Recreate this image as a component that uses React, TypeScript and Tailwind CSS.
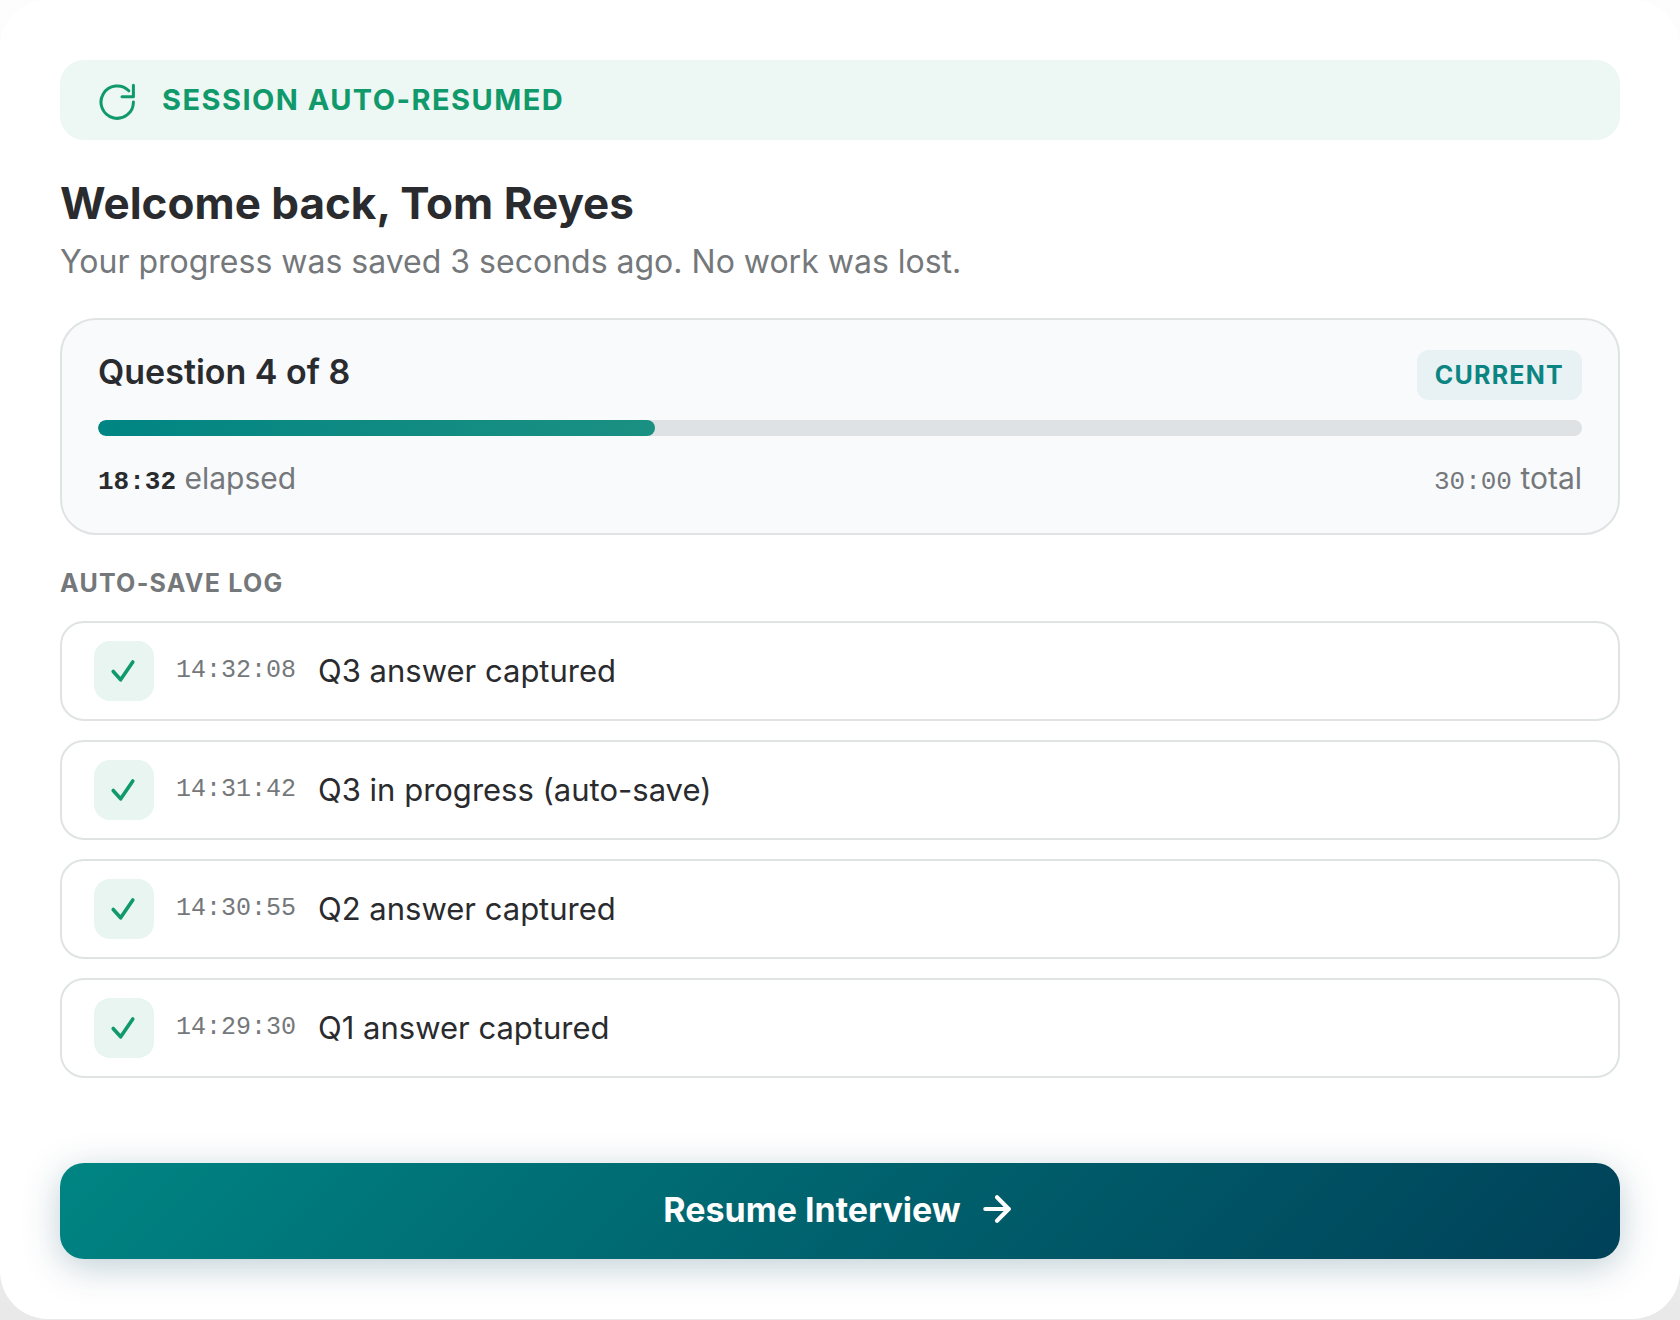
import { ArrowRight } from "lucide-react";

const logEntries = [
  { time: "14:32:08", label: "Q3 answer captured" },
  { time: "14:31:42", label: "Q3 in progress (auto-save)" },
  { time: "14:30:55", label: "Q2 answer captured" },
  { time: "14:29:30", label: "Q1 answer captured" },
];

const ResumeIcon = () => {
  return (
    <svg
      width="42"
      height="42"
      viewBox="0 0 42 42"
      fill="none"
      stroke="currentColor"
      strokeWidth="3"
      strokeLinecap="round"
      strokeLinejoin="round"
      aria-hidden="true"
    >
      <path d="M37.4 23A16.2 16.2 0 1 1 32.8 11.8" />
      <path d="M37.4 6.2V17.7H26" />
    </svg>
  );
};

const CheckIcon = () => {
  return (
    <svg
      width="32"
      height="32"
      viewBox="0 0 24 24"
      fill="none"
      stroke="currentColor"
      strokeWidth="2.7"
      strokeLinecap="round"
      strokeLinejoin="round"
      aria-hidden="true"
    >
      <path d="M3.9 12.4L9.5 18.6L18.6 5.2" />
    </svg>
  );
};

const SessionBanner = () => {
  return (
    <div
      role="status"
      className="flex h-20 items-center gap-6 rounded-3xl bg-[#edf7f4] px-9 text-[#10996b]"
    >
      <ResumeIcon />
      <p className="text-[29px] leading-10 font-bold tracking-wider">
        SESSION AUTO-RESUMED
      </p>
    </div>
  );
};

const ProgressCard = () => {
  return (
    <section className="mt-8 rounded-[36px] border-2 border-[#dfe3e4] bg-[#f8fafc] px-9 pt-[30px] pb-[31px]">
      <div className="flex items-start justify-between">
        <h2 className="text-[34px] leading-[44px] font-semibold">
          Question 4 of 8
        </h2>
        <span className="rounded-xl bg-[#e8f1f3] px-[18px] py-2 text-[25px] leading-[34px] font-bold tracking-wider text-[#0b8482]">
          CURRENT
        </span>
      </div>
      <div className="mt-5 h-4 overflow-hidden rounded-full bg-[#dee2e4]">
        <div className="h-full w-3/8 rounded-full bg-linear-to-r from-[#008583] to-[#1a9082]" />
      </div>
      <div className="mt-[22px] flex items-center justify-between text-[30px] leading-10 text-[#75787b]">
        <p>
          <span className="font-['Liberation_Mono',monospace] text-[26px] font-bold text-[#2a2b2e]">
            18:32
          </span>{" "}
          elapsed
        </p>
        <p>
          <span className="font-['Liberation_Mono',monospace] text-[26px]">
            30:00
          </span>{" "}
          total
        </p>
      </div>
    </section>
  );
};

const AutoSaveLog = () => {
  return (
    <section className="mt-[30px]">
      <h2 className="text-[25px] leading-9 font-bold tracking-wider text-[#75787b]">
        AUTO-SAVE LOG
      </h2>
      <ul className="mt-5 flex flex-col gap-[19px]">
        {logEntries.map((entry) => (
          <li
            key={entry.time}
            className="flex items-center gap-[22px] rounded-3xl border-2 border-[#dfe3e4] px-8 py-[18px]"
          >
            <span className="flex size-15 items-center justify-center rounded-2xl bg-[#e8f5f1] text-[#10996b]">
              <CheckIcon />
            </span>
            <time className="font-['Liberation_Mono',monospace] text-[25px] text-[#75787b]">
              {entry.time}
            </time>
            <span className="text-[31px] leading-10">{entry.label}</span>
          </li>
        ))}
      </ul>
    </section>
  );
};

const App = () => {
  return (
    <div className="bg-linear-to-b from-[#fdfdfd] to-[#e9e9e9] pb-px font-[Inter,sans-serif] text-[#2a2b2e]">
      <main className="rounded-[48px] bg-white p-15">
        <SessionBanner />
        <h1 className="mt-9 text-[44px] leading-[54px] font-bold">
          Welcome back, Tom Reyes
        </h1>
        <p className="mt-2 text-[32px] leading-12 text-[#75787b]">
          Your progress was saved 3 seconds ago. No work was lost.
        </p>
        <ProgressCard />
        <AutoSaveLog />
        <button
          type="button"
          className="mt-[85px] flex h-24 w-full items-center justify-center gap-4 rounded-3xl bg-linear-135 from-[#008583] to-[#004158] pb-1 text-[34px] font-bold text-white shadow-[0_8px_36px_rgba(0,65,88,0.25)]"
        >
          Resume Interview
          <ArrowRight size={40} strokeWidth={2.5} />
        </button>
      </main>
    </div>
  );
};

export default App;
